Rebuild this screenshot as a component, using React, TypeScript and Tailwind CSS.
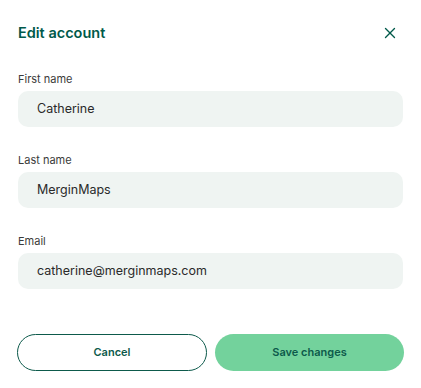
import { X } from 'lucide-react';

const fields = [
  { id: 'first', label: 'First name', value: 'Catherine' },
  { id: 'last', label: 'Last name', value: 'MerginMaps' },
  { id: 'email', label: 'Email', value: 'catherine@merginmaps.com' },
];

export default function App() {
  return (
    <div className="w-[421px] h-[388px] bg-white font-['Inter',sans-serif]">
      {/* Header */}
      <div className="flex items-center justify-between pl-[18px] pr-[22px] pt-[22px] h-[44px]">
        <h2 className="text-[14.5px] leading-[22px] font-semibold text-[#00594a]">Edit account</h2>
        <button className="text-[#00594a]">
          <X className="w-[18px] h-[18px]" strokeWidth={1.8} />
        </button>
      </div>

      <div className="px-[18px] pt-[27px] flex flex-col gap-[25px]">
        {fields.map((f) => (
          <div key={f.id} className="flex flex-col gap-1">
            <label className="text-[11px] leading-4 text-[#3b3b3b]">{f.label}</label>
            <div className="h-9 rounded-[10px] bg-[#eff4f2] flex items-center pt-px px-[19px] text-[12.5px] text-[#2a2a2a]">
              {f.value}
            </div>
          </div>
        ))}
      </div>

      {/* Footer */}
      <div className="flex gap-2 px-[17px] pt-[45px]">
        <button className="w-[190px] h-[37px] rounded-full border border-[#0d5a4b] text-[11px] font-semibold text-[#0d5a4b]">
          Cancel
        </button>
        <button className="w-[189px] h-[37px] rounded-full bg-[#73d29c] text-[11px] font-semibold text-[#0d5a4b]">
          Save changes
        </button>
      </div>
    </div>
  );
}
